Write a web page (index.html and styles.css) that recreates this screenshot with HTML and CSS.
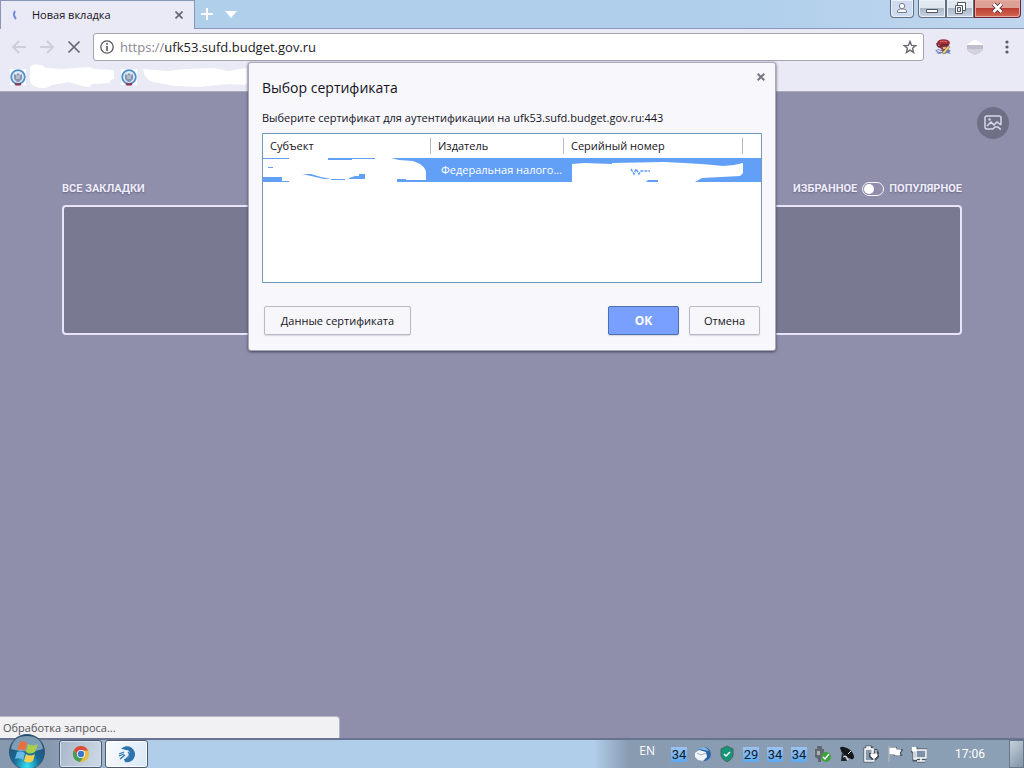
FILE: index.html
```html
<!DOCTYPE html>
<html lang="ru">
<head>
<meta charset="utf-8">
<meta name="viewport" content="width=device-width, initial-scale=1">
<title>Новая вкладка</title>
<link rel="stylesheet" href="styles.css">
</head>
<body>
<div class="desktop">
  <header class="browser">
    <div class="titlebar">
      <div class="tab">
        <svg class="spinner" width="14" height="16" viewBox="0 0 14 16"><path d="M6 4Q3.500 8 7 12" fill="none" stroke="#7088e0" stroke-width="2"/></svg>
        <span class="tab-title">Новая вкладка</span>
        <button class="plain" aria-label="Закрыть вкладку"><svg width="8" height="8" viewBox="0 0 8 8"><path d="M.5.5l7 7M7.500.5l-7 7" stroke="#66666f" stroke-width="1.700"/></svg></button>
      </div>
      <div class="tab-tools">
        <button class="plain" aria-label="Новая вкладка"><svg width="12" height="12" viewBox="0 0 12 12"><path d="M6 0v12M0 6h12" stroke="#fff" stroke-width="2"/></svg></button>
        <button class="plain" aria-label="Список вкладок"><svg width="12" height="7" viewBox="0 0 12 7"><path d="M0 0h12L6 7z" fill="#fff"/></svg></button>
      </div>
      <div class="window-controls">
        <button class="win win-user" aria-label="Пользователь"><svg width="12" height="12" viewBox="0 0 12 12"><path d="M1.500 10.500V9q0-1.500 3-2h3q3 .5 3 2v1.500z" fill="#fff" stroke="#777f94"/><circle cx="6" cy="4" r="2.700" fill="#fff" stroke="#777f94"/></svg></button>
        <div class="win-group">
          <button class="win" aria-label="Свернуть"><svg width="12" height="12" viewBox="0 0 12 12"><path d="M.5 7.500h11v3H.5z" fill="#fff" stroke="#505662"/></svg></button>
          <button class="win" aria-label="Восстановить"><svg width="13" height="12" viewBox="0 0 13 12"><path d="M3.500.5h8v8h-8z" fill="#fff" stroke="#505662"/><path d="M1.500 3.500h7v8h-7z" fill="#fff" stroke="#505662"/><path d="M3.500 5.500h3v4h-3z" fill="#dce5ef" stroke="#505662"/></svg></button>
          <button class="win win-close" aria-label="Закрыть"><svg width="13" height="12" viewBox="0 0 13 12"><path d="M2.500 2l8 8M10.500 2l-8 8" stroke="#5c3540" stroke-width="4.500"/><path d="M2.500 2l8 8M10.500 2l-8 8" stroke="#fff" stroke-width="2.600"/></svg></button>
        </div>
      </div>
    </div>
    <div class="toolbar">
      <button class="plain" aria-label="Назад"><svg width="16" height="16" viewBox="0 0 16 16"><path d="M15 8H2M8 2L2 8l6 6" fill="none" stroke="#ceced8" stroke-width="2"/></svg></button>
      <button class="plain" aria-label="Вперёд"><svg width="16" height="16" viewBox="0 0 16 16"><path d="M1 8h13M8 2l6 6-6 6" fill="none" stroke="#ceced8" stroke-width="2"/></svg></button>
      <button class="plain" aria-label="Остановить"><svg width="14" height="14" viewBox="0 0 14 14"><path d="M1.500 1.500l11 11M12.500 1.500l-11 11" stroke="#66666f" stroke-width="1.700"/></svg></button>
      <div class="address">
        <svg width="14" height="14" viewBox="0 0 14 14"><circle cx="7" cy="7" r="6.200" fill="none" stroke="#55555e" stroke-width="1.300"/><path d="M7 6v5M7 3v1.700" stroke="#55555e" stroke-width="1.600"/></svg>
        <a class="url" href="#"><span class="scheme">https://</span>ufk53.sufd.budget.gov.ru</a>
        <button class="plain" aria-label="В избранное"><svg width="14" height="14" viewBox="0 0 16 16"><path d="M8 1.700l1.800 4.500 4.700.3-3.600 3 1.200 4.700L8 11.600l-4.100 2.600 1.200-4.700-3.600-3 4.700-.3z" fill="none" stroke="#66666f" stroke-width="1.600"/></svg></button>
      </div>
      <div class="extensions">
        <button class="plain" aria-label="Расширение"><svg width="16" height="16" viewBox="0 0 16 16"><path d="M0 15l3-2-3-1 3-2 3 1 7-1 3 2-2 1 2 2-4-1-2 1-3-1-3 1-2-1z" fill="#6678b4"/><path d="M3 13l3-1 2 2 3-1M2 11l3 1" fill="none" stroke="#e5e8f5"/><path d="M4 5h9l-1 5-4 2-3-3z" fill="#94434a"/><ellipse cx="8.500" cy="3.800" rx="6.500" ry="3.600" fill="#a03038"/><path d="M2 4q0 4 3 4l2-2h7" fill="none" stroke="#62252e" stroke-width="1.500"/><path d="M5 3q4-2 7 0" stroke="#d97272" fill="none"/><path d="M8 8h3v2H8z" fill="#e4b190"/><path d="M7 14l6-7 2 1-6 7z" fill="#f0d977" stroke="#806b42" stroke-width=".6"/></svg></button>
        <button class="plain" aria-label="Защита"><svg width="16" height="16" viewBox="0 0 16 16"><path d="M0 5Q3 3 8 0q5 3 8 5v6q-3 3-8 5-5-2-8-5z" fill="#bfbdcc"/><path d="M0 6V5q3-2 8-5 5 3 8 5v1z" fill="#fff"/><path d="M0 10h16v1q-3 3-8 5-5-2-8-5z" fill="#d3d1de"/></svg></button>
        <button class="plain" aria-label="Меню"><svg width="16" height="16" viewBox="0 0 16 16"><g fill="#5b5b64"><circle cx="8" cy="3" r="1.600"/><circle cx="8" cy="8" r="1.600"/><circle cx="8" cy="13" r="1.600"/></g></svg></button>
      </div>
    </div>
    <nav class="bookmarks" aria-label="Закладки">
      <svg width="250" height="28" viewBox="0 0 250 28">
        <defs><g id="emblem"><path d="M0 0h16v16H0z" fill="#fff"/><circle cx="8" cy="8" r="6.800" fill="#dce9f5" stroke="#4f91cb" stroke-width="1.800"/><path d="M4 5l2 1 2-2 2 2 2-1v5l-3 3H7l-3-3z" fill="#8995ab"/><path d="M6 7h4M6 9h4" stroke="#dde2ed"/><path d="M5 15q3 1 6 0" fill="none" stroke="#8c3254" stroke-width="2"/></g></defs>
        <use href="#emblem" x="10" y="6"/><use href="#emblem" x="121" y="6"/>
        <path d="M30 4q3-4 9-2 5 0 6 3l17 1 28-2 3 2 21 1v9l-4 1v3l-18 1-3 3-7-1-13-4-17 3-6 3q-14 1-16-7z" fill="#fff"/>
        <path d="M143 6l25 2 17-2 29-1 15 3 10-2 8-1v16l-4 1-14-1-30 3-25-1-21-4q-9-3-10-13z" fill="#fff"/>
      </svg>
    </nav>
  </header>

  <main class="page">
    <button class="picture-button" aria-label="Сменить фон"><svg width="18" height="16" viewBox="0 0 18 16"><path d="M9 14H3q-2 0-2-2V3q0-2 2-2h12q2 0 2 2v7M3 11l4-4 3 3 3-3 4 3M9 14l2-2h3l2 2h1" fill="none" stroke="#d9d9ec" stroke-width="1.500"/><circle cx="5.500" cy="4.500" r="1.200" fill="#d9d9ec"/></svg></button>
    <section class="speed-dial">
      <div class="dial-head">
        <h2 class="dial-label">ВСЕ ЗАКЛАДКИ</h2>
        <label class="dial-label switch-label">ИЗБРАННОЕ <input class="switch" type="checkbox" role="switch"> ПОПУЛЯРНОЕ</label>
      </div>
      <div class="dial-box"></div>
    </section>
    <div class="status">Обработка запроса...</div>
  </main>

  <footer class="taskbar">
    <div class="launch">
      <button class="start" aria-label="Пуск">
        <svg width="38" height="38" viewBox="0 0 38 38"><defs><radialGradient id="orb" cx=".5" cy=".9" r=".85"><stop offset="0" stop-color="#37e1f4"/><stop offset=".45" stop-color="#176a97"/><stop offset="1" stop-color="#294968"/></radialGradient></defs><circle cx="19" cy="19" r="17.500" fill="url(#orb)" stroke="#315676"/><path d="M3 16Q5 3 19 3t16 13Q20 21 3 16z" fill="#b9d0df" opacity=".6"/><path d="M12 9q4-2 7 1l-2 8q-4-3-8-1z" fill="#e9703d"/><path d="M20 11q5 3 10 0l-3 8q-5 3-9 0z" fill="#a9cf47"/><path d="M9 19q4-2 8 1l-2 7q-4-3-8-1z" fill="#69bae7"/><path d="M18 21q4 3 9 0l-2 7q-5 3-9 0z" fill="#f7cf4f"/></svg>
      </button>
      <button class="task" aria-label="Chrome"><svg width="18" height="18" viewBox="0 0 18 18"><circle cx="9" cy="9" r="8" fill="#e7bd43"/><path d="M9 5.500H16A8 8 0 0 0 2 5l4 6z" fill="#d84d3f"/><path d="M2 5a8 8 0 0 0 6 12l4-6H6z" fill="#469c58"/><circle cx="9" cy="9" r="4" fill="#fff"/><circle cx="9" cy="9" r="3.200" fill="#3c75cd"/></svg></button>
      <button class="task task-light" aria-label="Приложение"><svg width="18" height="18" viewBox="0 0 18 18"><path d="M3 4a8 8 0 1 1 4 13l-1-3a5 5 0 0 0 6-5A4 4 0 0 0 8 5q-3-1-5-1z" fill="#2d73ad"/><path d="M10 7a3 3 0 0 1 1 4l-4 4M1 9l5-2M1 11l5-2M2 14l5-4" fill="none" stroke="#2d73ad" stroke-width="1.300"/></svg></button>
    </div>
    <div class="tray">
      <span class="lang">EN</span>
      <div class="tray-icons">
        <span class="num">34</span>
        <svg width="16" height="16" viewBox="0 0 16 16"><circle cx="9" cy="8" r="7" fill="#2e63a7"/><path d="M3 3q7-5 11 2l-5-1z" fill="#82b4dd"/><path d="M0 7l4-3 7 2 1 5-4 4-5-1-3-3z" fill="#eef4fa"/><path d="M2 7l4 2 5-2" fill="none" stroke="#9fabc2"/></svg>
        <svg width="16" height="18" viewBox="0 0 16 18"><path d="M8 1l6 3v7q-2 4-6 6-4-2-6-6V4z" fill="#159577" stroke="#45665f"/><path d="M5 9l2 2 4-4" fill="none" stroke="#fff" stroke-width="1.500"/></svg>
        <span class="num">29</span><span class="num">34</span><span class="num">34</span>
        <svg width="16" height="18" viewBox="0 0 16 18"><path d="M2 1h5v4H2zM0 4h9v8l-3 2v3H3v-3l-3-2z" fill="#626970"/><path d="M2 6h3v4H2z" fill="#aeb5b9"/><circle cx="11" cy="12" r="5" fill="#3fa23d"/><path d="M8 12l2 2 4-5" fill="none" stroke="#fff" stroke-width="1.500"/></svg>
        <svg width="16" height="18" viewBox="0 0 16 18"><path d="M1 3q1-2 4-1 8 2 10 9 0 4-3 3Q3 11 1 3z" fill="#15171a"/><path d="M3 8l-1 8h6l-2-4" fill="#22252a"/><path d="M4 12l3-1 2 4M9 9l3-3" stroke="#e4e7eb" fill="none"/></svg>
        <svg width="16" height="18" viewBox="0 0 16 18"><path d="M10 3H9v13H2V4h2V2h3v1M9 4v4M13 4v4M7 8h8v3l-3 3h-2l-2-3z" fill="none" stroke="#48515c" stroke-width="3"/><path d="M2 4h8v12H2zM4 4V2h3v2" fill="#8799ad" stroke="#fff" stroke-width="1.500"/><path d="M6 8h10v4l-3 3h-4l-3-3z" fill="#48515c"/><path d="M9 5v4M13 5v4M8 9h6v2l-2 2h-2l-2-2zM11 13v3" fill="#fff" stroke="#fff"/></svg>
        <svg width="16" height="18" viewBox="0 0 16 18"><path d="M2 1v16M3 3h6v2h6l-2 3 1 2H8V9H3z" fill="#fff" stroke="#4f5a67" stroke-width="2"/><path d="M2 1v16M3 3h6v2h5l-2 3 1 2H8V9H3z" fill="#fff" stroke="#fff"/></svg>
        <svg width="16" height="18" viewBox="0 0 16 18"><path d="M5 5h10v8H5zM6 16h8M1 2v4h4V2M3 6v9h4" fill="none" stroke="#46525e" stroke-width="3"/><path d="M5 5h10v8H5z" fill="#7c91a7" stroke="#fff" stroke-width="1.500"/><path d="M10 13v3M6 16h8M3 6v8h3" fill="none" stroke="#fff" stroke-width="1.500"/><path d="M1 2v4h4V2M3 2v4" fill="#fff" stroke="#fff"/></svg>
      </div>
      <time class="clock">17:06</time>
      <button class="show-desktop" aria-label="Показать рабочий стол"></button>
    </div>
  </footer>

  <section class="dialog" role="dialog" aria-labelledby="dialog-title">
    <div class="dialog-head">
      <h1 id="dialog-title" class="dialog-title">Выбор сертификата</h1>
      <button class="plain dialog-close" aria-label="Закрыть"><svg width="8" height="8" viewBox="0 0 8 8"><path d="M.7.7l6.600 6.600M7.300.7L.7 7.300" stroke="#777782" stroke-width="2"/></svg></button>
    </div>
    <p class="dialog-text">Выберите сертификат для аутентификации на ufk53.sufd.budget.gov.ru:443</p>
    <div class="cert-box">
      <table class="certs">
        <colgroup><col class="col-subject"><col class="col-issuer"><col class="col-serial"><col></colgroup>
        <thead><tr><th>Субъект</th><th>Издатель</th><th>Серийный номер</th><th></th></tr></thead>
        <tbody><tr>
          <td class="masked"><svg width="168" height="24" viewBox="0 0 168 24"><path d="M0 1h26V0h39v2h24V1h23V0h16l8 2 14 1 7 3q6 4 6 9v7h-20v-1h-9v3H19v-5H0z" fill="#fff"/><path d="M5 9h5v1H5zM39 16h9l10 3 10 2h-7l-13-3zM68 21h14v1H68zM86 20l6-2h4v-2h6v5H86zM0 23h26v1H0z" fill="#62a0f8"/></svg></td>
          <td class="issuer">Федеральная налого...</td>
          <td class="masked"><svg width="179" height="24" viewBox="0 0 179 24"><path d="M8 6l12-1 28 1V5l52-1 20 1 17 1 12 1 10 1 11-1 9-2v10l-3 3-38 2-7 4H94v-2H84l-2 2H8z" fill="#fff"/><path d="M94 22l-8 0-4 2h12z" fill="#62a0f8"/><path d="M67 11l3 5 2-5 3 5 2-3h9" fill="none" stroke="#62a0f8" stroke-width="1.500" stroke-dasharray="3 1"/></svg></td>
          <td></td>
        </tr></tbody>
      </table>
    </div>
    <div class="actions">
      <button class="btn btn-details">Данные сертификата</button>
      <button class="btn btn-ok">ОК</button>
      <button class="btn">Отмена</button>
    </div>
  </section>
</div>
</body>
</html>
```
FILE: styles.css
```css
* { box-sizing: border-box; }
body { margin: 0; font: 11px/16px "Open Sans", "Noto Sans", sans-serif; color: #15131c; }
button { font: inherit; color: inherit; cursor: pointer; }
svg { display: block; flex: none; }
.desktop { position: relative; min-height: 100vh; display: flex; flex-direction: column; overflow: hidden; background: #8f8fac; }
.plain { display: flex; padding: 0; border: 0; background: none; }

.browser { background: #eae9f6; border-bottom: 1px solid #aaa9bc; }
.titlebar { display: flex; height: 29px; background: linear-gradient(90deg, #afcfeb 70%, #c0d6ef); border-bottom: 1px solid #8797b4; }
.tab { display: flex; align-items: center; gap: 9px; width: 195px; height: 29px; padding: 0 11px 0 8px; background: #eae9f6; border: 1px solid #8997b5; border-bottom: 0; }
.tab-title { flex: 1; }
.tab-tools { display: flex; align-items: center; gap: 12px; padding-left: 6px; }
.window-controls { display: flex; gap: 4px; margin-left: auto; padding-right: 3px; }
.win-group { display: flex; }
.win { display: flex; align-items: center; justify-content: center; width: 28px; height: 18px; padding: 0 0 2px; border: 1px solid #646e83; border-top: 0; background: linear-gradient(#dfe7ef 45%, #a9b7c8 50%, #cbd6e3); box-shadow: inset 0 0 0 1px #e9f1f8; }
.win-user { width: 24px; border-radius: 0 0 4px 4px; background: #cfdcf0; }
.win-group .win:first-child { border-radius: 0 0 0 4px; }
.win-close { width: 47px; border-color: #6e2630; border-radius: 0 0 4px 0; background: linear-gradient(#dda095 45%, #bd3e35 50%, #d26a50); box-shadow: inset 0 0 0 1px #e5aaa2; }
.toolbar { display: flex; align-items: center; gap: 12px; height: 34px; padding: 1px 9px 0 11px; }
.address { flex: 1; display: flex; align-items: center; gap: 6px; height: 28px; padding: 0 6px; border: 1px solid #a6a4b2; border-radius: 3px; background: #fff; }
.url { flex: 1; color: #1d1b25; font-size: 13px; text-decoration: none; }
.scheme { color: #888890; }
.extensions { display: flex; gap: 16px; margin-left: -1px; }
.bookmarks { height: 27px; }

.page { flex: 1; display: flex; flex-direction: column; }
.picture-button { align-self: flex-end; display: flex; align-items: center; justify-content: center; width: 32px; height: 32px; margin: 15px 15px 0 0; padding: 0; border: 0; border-radius: 50%; background: #6f6f86; }
.speed-dial { margin: 42px 62px 0; }
.dial-head { display: flex; justify-content: space-between; align-items: center; height: 16px; margin-bottom: 8px; }
.dial-label { margin: 0; color: #efedfc; font: bold 11px/16px Roboto, sans-serif; text-shadow: 0 1px 2px #656580; }
.switch-label { display: flex; align-items: center; gap: 5px; }
.switch { appearance: none; display: flex; align-items: center; width: 22px; height: 14px; margin: 0; padding: 1px; border: 1px solid #f4f3ff; border-radius: 7px; }
.switch::before { content: ""; width: 10px; height: 10px; border-radius: 50%; background: #fff; }
.switch:checked { justify-content: flex-end; }
.dial-box { height: 130px; border: 2px solid #e8e5fa; border-radius: 4px; background: #797992; }
.status { width: 340px; max-width: 100%; height: 22px; margin-top: auto; padding: 3px; border: 1px solid #b5b4c1; border-left: 0; border-bottom: 0; border-radius: 0 4px 0 0; background: #f1f0f2; color: #55555a; }

.browser { padding-bottom: 1px; }
.taskbar { display: flex; justify-content: space-between; height: 30px; border-top: 2px solid #68748f; background: linear-gradient(90deg, #8799ae 50px, #b0cdea 150px); }
.launch { display: flex; gap: 3px; padding-left: 8px; }
.start { z-index: 1; display: flex; width: 38px; height: 38px; margin: -7px 10px 0 0; padding: 0; border: 0; background: none; }
.task { display: flex; align-items: center; justify-content: center; width: 43px; height: 28px; padding: 0; border: 1px solid #4b5a70; border-radius: 3px; background: linear-gradient(110deg, #a8b7c8, #cedae7); box-shadow: inset 0 0 0 1px #d5e1ed; }
.task-light { background: linear-gradient(110deg, #fbfcfe, #d8e8f7); box-shadow: inset 0 0 0 1px #fff; }
.tray { display: flex; align-items: center; padding-left: 45px; background: linear-gradient(90deg, #b0cdea, #889bb1 35px, #8b9fb5); color: #fff; font-size: 12px; }
.lang { align-self: flex-start; padding-top: 3px; }
.tray-icons { display: flex; align-items: center; gap: 8px; margin-left: 16px; }
.num { width: 16px; height: 15px; background: linear-gradient(#9ec3f2, #5eaaf0); color: #111d2c; font: 13px/15px Roboto, sans-serif; text-align: center; }
.clock { width: 82px; padding-left: 4px; font: 12px/16px Roboto, sans-serif; text-align: center; }
.show-desktop { align-self: stretch; width: 15px; padding: 0; border: 1px solid #65758a; background: linear-gradient(135deg, #c5d0dc, #8193a8); }

.dialog { position: absolute; top: 62px; left: 50%; width: 528px; max-width: 100%; padding: 14px 13px 15px; transform: translateX(-50%); border: 1px solid #aaa9b9; border-radius: 3px; background: #f7f7fc; box-shadow: 0 1px 3px #424258; }
.dialog-head { display: flex; justify-content: space-between; }
.dialog-title { margin: 0; font-size: 14px; line-height: 22px; font-weight: 400; }
.dialog-close { align-self: flex-start; margin-right: -4px; margin-top: -4px; padding: 0 1px; }
.dialog-text { margin: 11px 0 7px; }
.cert-box { height: 150px; border: 1px solid #719bb8; background: #fff; }
.certs { width: 100%; table-layout: fixed; border-collapse: collapse; }
.col-subject { width: 168px; }
.col-issuer { width: 133px; }
.col-serial { width: 179px; }
.certs th { height: 24px; padding: 0 7px; font-weight: 400; text-align: left; background: linear-gradient(#b9b9c1, #b9b9c1) right center / 1px 16px no-repeat; }
.certs th:last-child { background: none; }
.certs td { height: 24px; padding: 0; background: #62a0f8; color: #fff; }
.certs .issuer { padding-left: 10px; white-space: nowrap; }
.actions { display: flex; gap: 10px; margin-top: 23px; padding: 0 2px; }
.btn { min-width: 71px; height: 29px; padding: 0 13px; border: 1px solid #b9b8c5; border-radius: 2px; background: #f7f7fb; box-shadow: 0 1px 1px #d9d8e1; }
.btn-details { min-width: 147px; margin-right: auto; }
.btn-ok { border-color: #4e6fae; background: #7aa0ff; color: #fff; font-size: 12px; font-weight: 700; }
```
